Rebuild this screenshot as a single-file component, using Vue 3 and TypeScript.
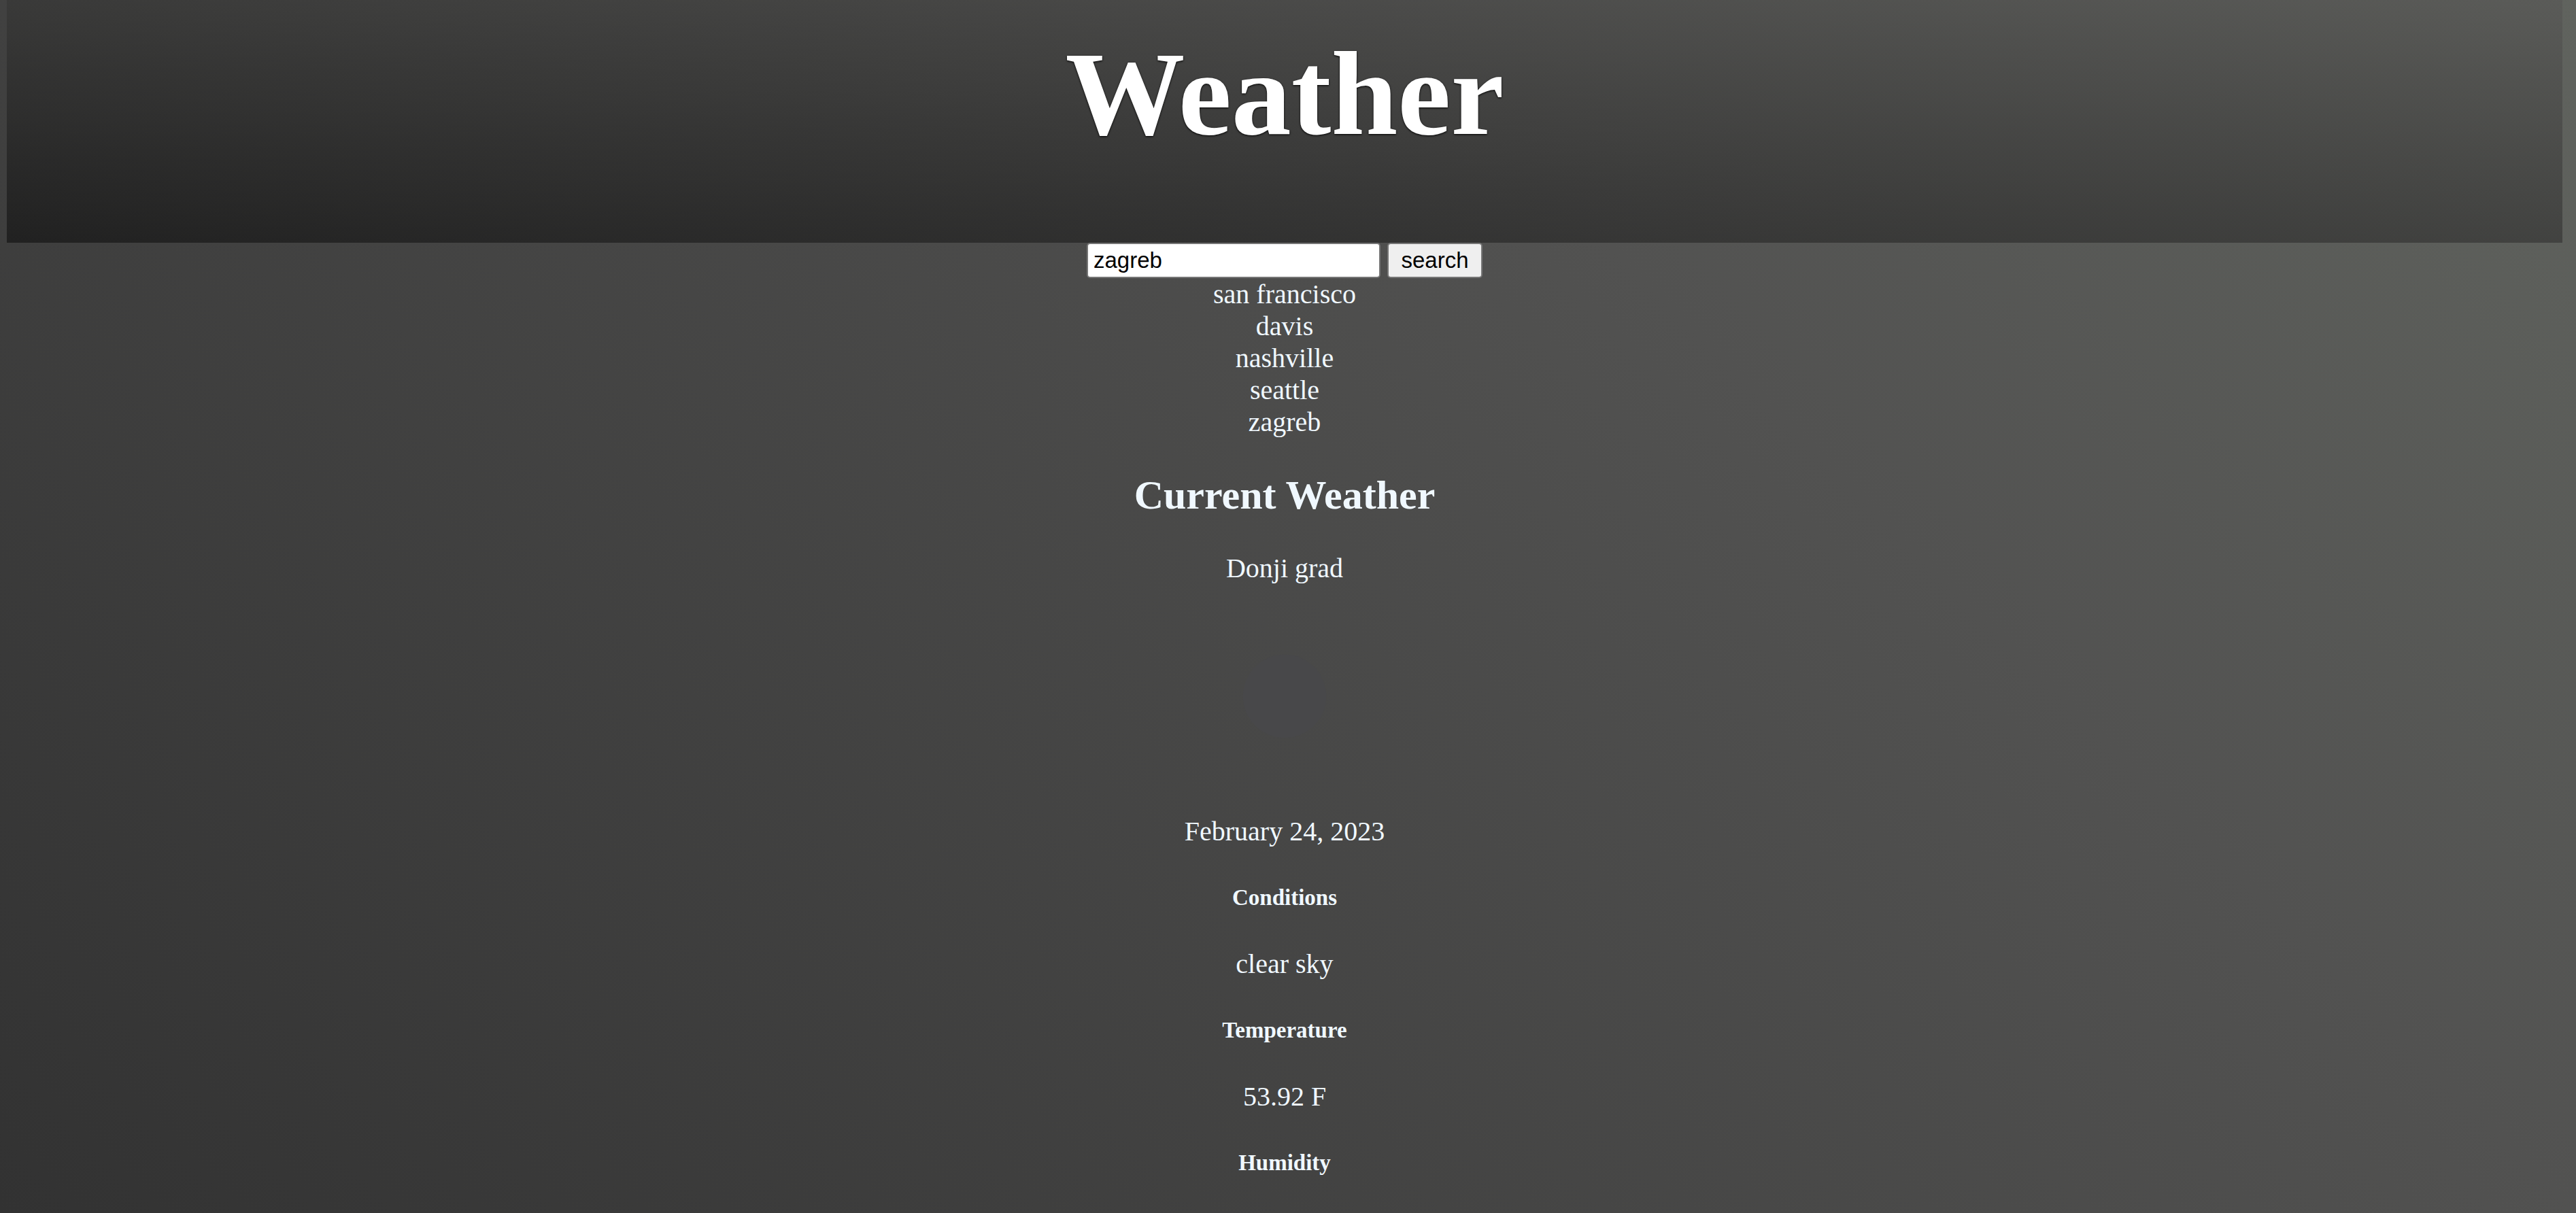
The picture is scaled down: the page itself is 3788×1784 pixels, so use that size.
<script setup lang="ts">
import { ref } from 'vue'

interface Reading {
  label: string
  value?: string
}

const query = ref('zagreb')
const history = ref<string[]>(['san francisco', 'davis', 'nashville', 'seattle', 'zagreb'])
const place = 'Donji grad'
const date = 'February 24, 2023'
const readings: Reading[] = [
  { label: 'Conditions', value: 'clear sky' },
  { label: 'Temperature', value: '53.92 F' },
  { label: 'Humidity' },
]

function search(): void {
  const city = query.value.trim()
  if (city && !history.value.includes(city)) history.value.push(city)
}
</script>

<template>
  <div class="page">
    <header class="banner">
      <h1>Weather</h1>
    </header>
    <main>
      <form class="search" @submit.prevent="search">
        <input v-model="query" type="text" aria-label="City" />
        <button type="submit">search</button>
      </form>
      <ul class="history">
        <li v-for="city in history" :key="city">{{ city }}</li>
      </ul>
      <section class="current">
        <h2>Current Weather</h2>
        <p>{{ place }}</p>
        <svg class="icon" viewBox="0 0 100 100" role="img" aria-label="clear night">
          <circle cx="50" cy="50" r="24.5" fill="#48484a" />
        </svg>
        <p>{{ date }}</p>
        <template v-for="reading in readings" :key="reading.label">
          <h5>{{ reading.label }}</h5>
          <p v-if="reading.value">{{ reading.value }}</p>
        </template>
      </section>
    </main>
  </div>
</template>

<style>
body {
  margin: 0;
}
</style>

<style scoped>
.page {
  box-sizing: border-box;
  min-height: 100vh;
  padding: 0 20px 0 10px;
  background: linear-gradient(45deg, #323232, #525251 68%, #60635e);
  color: aliceblue;
  font-family: "Liberation Serif", "Times New Roman", serif;
  font-size: 40px;
  line-height: 47px;
  text-align: center;
}

.banner {
  box-sizing: border-box;
  height: 357px;
  padding-top: 38px;
  background: linear-gradient(to top right, rgba(21, 21, 21, 0.71), rgba(88, 88, 86, 0.71));
}

h1 {
  margin: 0;
  color: #fff;
  font-size: 176px;
  line-height: 200px;
  text-shadow: 0 1px 3px #000;
}

.search {
  display: flex;
  justify-content: center;
  gap: 10px;
}

.search input,
.search button {
  box-sizing: border-box;
  height: 52px;
  border: 2px solid #767676;
  border-radius: 5px;
  color: #000;
  font-family: "Liberation Sans", Arial, sans-serif;
  font-size: 33px;
}

.search input {
  width: 432px;
  padding: 0 8px;
  background: #fff;
}

.search button {
  width: 140px;
  padding: 0;
  background: #efefef;
}

.history {
  margin: 0;
  padding: 0;
  list-style: none;
}

.current {
  display: flex;
  flex-direction: column;
  align-items: center;
}

h2 {
  margin: 50px 0;
  font-size: 60px;
  line-height: 68px;
}

p {
  margin: 0;
}

.icon {
  width: 250px;
  height: 250px;
  margin: 40px 0 50px;
}

h5 {
  margin: 55px 0;
  font-size: 33px;
  line-height: 38px;
}

h5:last-child {
  margin-bottom: 0;
}
</style>
